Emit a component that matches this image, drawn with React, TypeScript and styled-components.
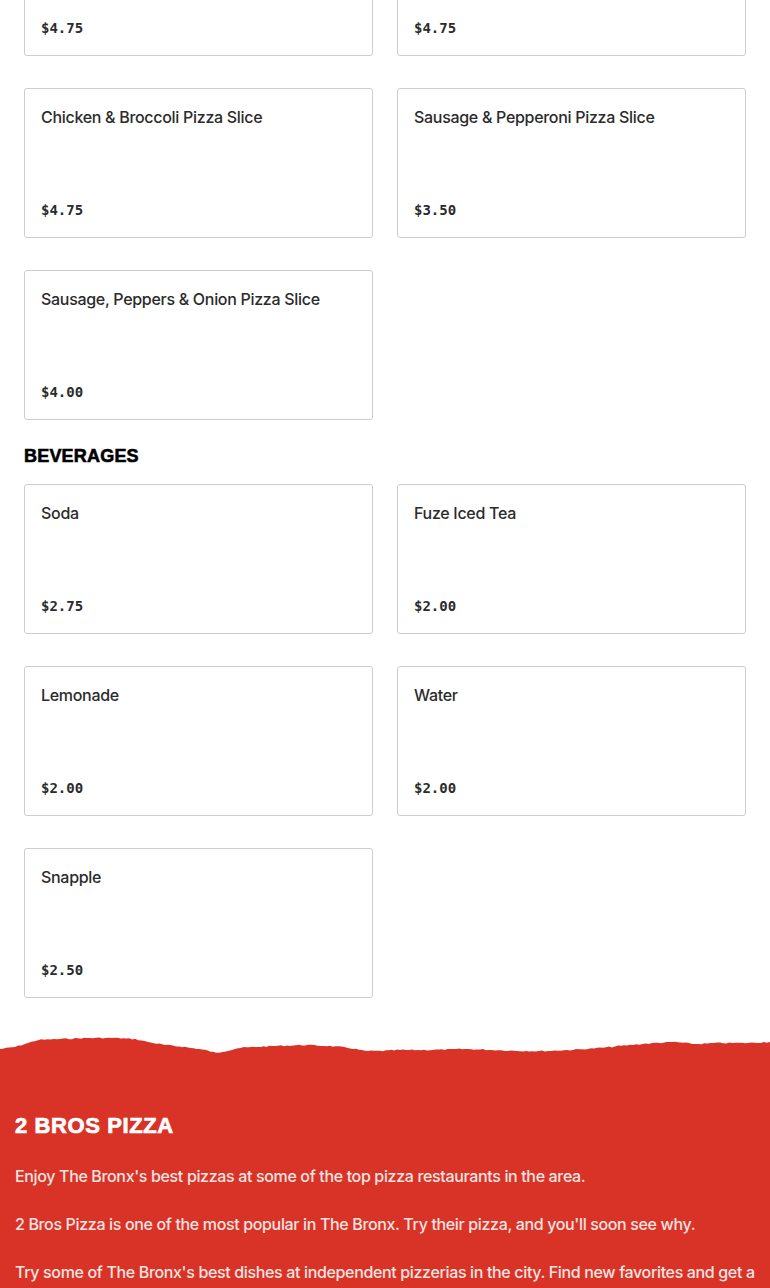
import styled, { createGlobalStyle } from "styled-components";

type Item = { name: string; price: string };

const pizzaSlices: Item[] = [
  { name: "Buffalo Chicken Pizza Slice", price: "$4.75" },
  { name: "Chicken Bacon Ranch Pizza Slice", price: "$4.75" },
  { name: "Chicken & Broccoli Pizza Slice", price: "$4.75" },
  { name: "Sausage & Pepperoni Pizza Slice", price: "$3.50" },
  { name: "Sausage, Peppers & Onion Pizza Slice", price: "$4.00" },
];

const beverages: Item[] = [
  { name: "Soda", price: "$2.75" },
  { name: "Fuze Iced Tea", price: "$2.00" },
  { name: "Lemonade", price: "$2.00" },
  { name: "Water", price: "$2.00" },
  { name: "Snapple", price: "$2.50" },
];

// rough outline of the torn paper edge, x / y in the 770 x 22 box
const edgeShape: [number, number][] = [
  [0, 13], [15, 11], [28, 7], [38, 4], [60, 3], [90, 2], [115, 2], [135, 3],
  [148, 6], [165, 9], [185, 11], [205, 14], [216, 17], [226, 15], [238, 12],
  [255, 11], [275, 10], [305, 9], [330, 10], [350, 12], [365, 15], [380, 15],
  [400, 14], [430, 14], [465, 13], [495, 14], [520, 15], [545, 15], [570, 14],
  [600, 12], [630, 9], [655, 7], [675, 6], [695, 8], [720, 7], [745, 7], [770, 6],
];

const tornEdge = (() => {
  const pts: string[] = [];
  let seed = 7;
  const rand = () => {
    seed = (seed * 9301 + 49297) % 233280;
    return seed / 233280;
  };
  for (let i = 0; i < edgeShape.length - 1; i++) {
    const [x1, y1] = edgeShape[i];
    const [x2, y2] = edgeShape[i + 1];
    const steps = Math.max(1, Math.round((x2 - x1) / 3));
    for (let s = 0; s < steps; s++) {
      const t = s / steps;
      const x = x1 + (x2 - x1) * t;
      const y = y1 + (y2 - y1) * t + (rand() - 0.5) * 1.2;
      pts.push(`${x.toFixed(1)} ${y.toFixed(1)}`);
    }
  }
  pts.push("770 6");
  return `M${pts.join(" L")} L770 22 L0 22 Z`;
})();

export default function App() {
  return (
    <>
      <GlobalStyle />
      <Menu>
        <Grid>
          {pizzaSlices.map((item) => (
            <Card key={item.name}>
              <ItemName>{item.name}</ItemName>
              <Price>{item.price}</Price>
            </Card>
          ))}
        </Grid>
        <SectionTitle>BEVERAGES</SectionTitle>
        <Grid>
          {beverages.map((item) => (
            <Card key={item.name}>
              <ItemName>{item.name}</ItemName>
              <Price>{item.price}</Price>
            </Card>
          ))}
        </Grid>
      </Menu>
      <Footer>
        <Edge viewBox="0 0 770 22" preserveAspectRatio="none">
          <path d={tornEdge} fill="#d93328" />
        </Edge>
        <FooterBody>
          <FooterTitle>2 BROS PIZZA</FooterTitle>
          <FooterText>
            Enjoy The Bronx's best pizzas at some of the top pizza restaurants
            in the area.
          </FooterText>
          <FooterText>
            2 Bros Pizza is one of the most popular in The Bronx. Try their
            pizza, and you'll soon see why.
          </FooterText>
          <FooterText>
            Try some of The Bronx's best dishes at independent pizzerias in the
            city. Find new favorites and get a taste of what makes local
            pizza so good.
          </FooterText>
        </FooterBody>
      </Footer>
    </>
  );
}

const GlobalStyle = createGlobalStyle`
  body {
    margin: 0;
    background: #fff;
    font-family: Inter, "Liberation Sans", sans-serif;
    color: #2b2b2b;
  }
`;

const Menu = styled.main`
  padding: 0 24px;
  margin-top: -94px;
`;

const Grid = styled.div`
  display: grid;
  grid-template-columns: 1fr 1fr;
  column-gap: 24px;
  row-gap: 32px;
`;

const Card = styled.div`
  height: 150px;
  box-sizing: border-box;
  border: 1px solid #cdcdcd;
  border-radius: 3px;
  padding: 16px;
  display: flex;
  flex-direction: column;
  justify-content: space-between;
`;

const ItemName = styled.div`
  font-size: 16px;
  line-height: 24px;
  font-weight: 500;
  letter-spacing: -0.3px;
  color: #2b2b2b;
`;

const Price = styled.div`
  font-family: "DejaVu Sans Mono", "Liberation Mono", monospace;
  font-size: 14px;
  line-height: 22px;
  font-weight: 700;
  color: #2b2b2b;
`;

const SectionTitle = styled.h2`
  margin: 25px 0 17px;
  font-family: "Liberation Sans", Arial, sans-serif;
  font-size: 18px;
  line-height: 22px;
  font-weight: 700;
  letter-spacing: 0.2px;
  -webkit-text-stroke: 0.6px #000;
  color: #000;
`;

const Footer = styled.footer`
  margin-top: 38px;
`;

const Edge = styled.svg`
  display: block;
  width: 100%;
  height: 22px;
`;

const FooterBody = styled.div`
  background: #d93328;
  padding: 55px 12px 24px 15px;
  margin-top: -1px;
`;

const FooterTitle = styled.h2`
  margin: 0 0 24px;
  font-family: "Liberation Sans", Arial, sans-serif;
  font-size: 22px;
  line-height: 28px;
  font-weight: 700;
  letter-spacing: 0.6px;
  -webkit-text-stroke: 0.7px #fff;
  color: #fff;
`;

const FooterText = styled.p`
  margin: 0 0 24px;
  font-size: 16px;
  line-height: 24px;
  font-weight: 500;
  letter-spacing: -0.35px;
  color: #f6e4e0;
`;
